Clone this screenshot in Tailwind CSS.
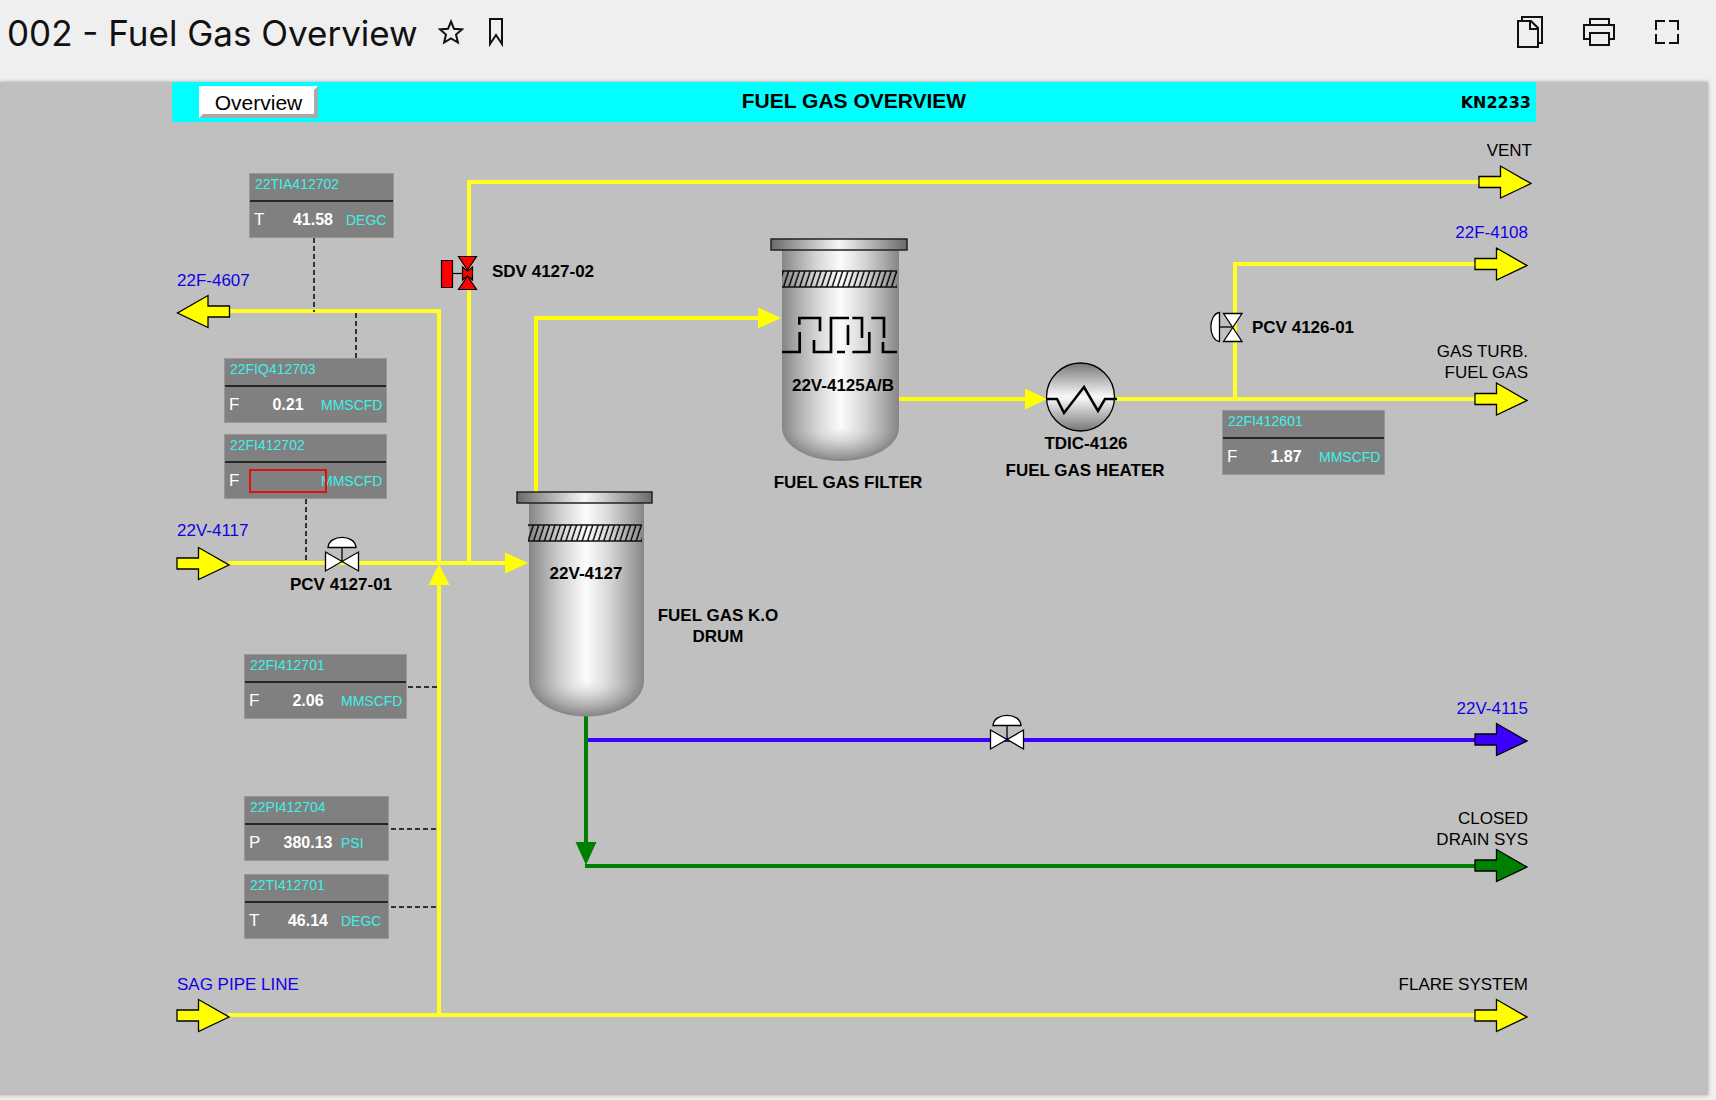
<!DOCTYPE html>
<html lang="en">
<head>
<meta charset="utf-8">
<meta name="viewport" content="width=device-width, initial-scale=1">
<title>002 - Fuel Gas Overview</title>
<script src="https://cdn.jsdelivr.net/npm/@tailwindcss/browser@4"></script>
</head>
<body class="flex min-h-screen flex-col bg-[#efefef] font-['Liberation_Sans',Arial,sans-serif] text-black">

<header class="flex h-[82px] shrink-0 items-start justify-between pt-[11px] pr-[37px] pl-[7px]">
  <div class="flex items-center gap-5">
    <h1 class="font-['Inter',sans-serif] text-[35px] leading-[44px] text-[#111]">002 - Fuel Gas Overview</h1>
    <div class="flex items-center gap-6 pb-0.5">
      <button type="button" aria-label="Add to favourites">
        <svg class="block" width="26" height="26" viewBox="0 0 26 26" fill="none" stroke="#111" stroke-width="2"><path d="M13 2.500l3 7.300 8 .6-6 5.100 1.900 8-6.900-4.200-6.900 4.200 1.900-8-6-5.100 8-.6z"/></svg>
      </button>
      <button type="button" aria-label="Bookmark">
        <svg class="block" width="16" height="30" viewBox="0 0 16 30" fill="none" stroke="#111" stroke-width="2"><path d="M2 2h12v25l-6-9-6 9z"/></svg>
      </button>
    </div>
  </div>
  <div class="flex items-center gap-10 pt-[5px]">
    <button type="button" aria-label="Copy">
      <svg class="block" width="26" height="32" viewBox="0 0 26 32" fill="none" stroke="#111" stroke-width="2"><path d="M5 4V1h20v26h-3M1 5h13l7 7v19H1zM13 5v8h8"/></svg>
    </button>
    <button type="button" aria-label="Print">
      <svg class="block" width="32" height="28" viewBox="0 0 32 28" fill="none" stroke="#111" stroke-width="2"><path d="M7 7V1h19v6M7 21H1V7h30v14h-5M7 15h19v12H7z"/></svg>
    </button>
    <button type="button" aria-label="Full screen">
      <svg class="block" width="24" height="24" viewBox="0 0 24 24" fill="none" stroke="#111" stroke-width="2"><path d="M1 10V1h9M14 1h9v9M23 14v9h-9M10 23H1v-9"/></svg>
    </button>
  </div>
</header>

<main class="mr-2 mb-[5px] grow bg-[#c0c0c0] shadow-[0_0_4px_rgba(0,0,0,0.3)]">
  <div class="mx-auto w-[1364px]">

    <div class="grid h-10 grid-cols-3 items-center bg-[#00ffff]">
      <button type="button" class="ml-[27px] h-8 w-[119px] justify-self-start border-4 border-t-white border-r-[#a9a9a9] border-b-[#a9a9a9] border-l-white bg-white pt-0.5 text-[21px] leading-[22px]">Overview</button>
      <h2 class="pb-0.5 text-center text-[21px] leading-6 font-bold">FUEL GAS OVERVIEW</h2>
      <span class="pt-0.5 pr-[5px] text-right font-['DejaVu_Sans',sans-serif] text-base leading-6 font-bold">KN2233</span>
    </div>

    <div class="relative h-[973px]">
      <svg class="absolute inset-0" width="1364" height="973" viewBox="172 122 1364 973" fill="none" aria-hidden="true">
        <defs>
          <linearGradient id="steel">
            <stop offset="0" stop-color="#858585"/><stop offset=".12" stop-color="#a8a8a8"/><stop offset=".3" stop-color="#d6d6d6"/>
            <stop offset=".5" stop-color="#fcfcfc"/><stop offset=".7" stop-color="#d6d6d6"/><stop offset=".88" stop-color="#a8a8a8"/><stop offset="1" stop-color="#858585"/>
          </linearGradient>
          <linearGradient id="flange">
            <stop offset="0" stop-color="#6a6a6a"/><stop offset=".5" stop-color="#f6f6f6"/><stop offset="1" stop-color="#6a6a6a"/>
          </linearGradient>
          <linearGradient id="heater" x2="0" y2="1">
            <stop offset="0" stop-color="#777"/><stop offset=".5" stop-color="#fafafa"/><stop offset="1" stop-color="#777"/>
          </linearGradient>
          <radialGradient id="dome" cx=".5" cy="0" r="1" gradientTransform="translate(.25 0) scale(.5 1)">
            <stop offset="0" stop-color="#fcfcfc"/><stop offset=".4" stop-color="#d6d6d6"/><stop offset=".76" stop-color="#a8a8a8"/><stop offset="1" stop-color="#858585"/>
          </radialGradient>
          <pattern id="hatch" width="5.400" height="20" patternUnits="userSpaceOnUse" patternTransform="skewX(-18)">
            <path d="M2 0V20" stroke="#000" stroke-width="1.500"/>
          </pattern>
          <path id="arrow" d="M.5 11H22V.5L52.500 18L22 32.500V22H.5Z" stroke="#000" stroke-width="1.300"/>
          <g id="valve" stroke="#000" stroke-width="1.300">
            <path d="M-16.500 -10L16.500 9V-10L-16.500 9Z" fill="#fff"/>
            <path d="M0 0V-15"/>
            <path d="M-14 -14.500C-13 -28 13 -28 14 -14.500Z" fill="#fff"/>
          </g>
        </defs>

        <!-- gas piping -->
        <g stroke="#ffff22" stroke-width="4">
          <path d="M1479 182H469V563"/>
          <path d="M230 311H439V564M439 584V1015"/>
          <path d="M228 563H506M228 1015H1475"/>
          <path d="M1114 399H1475M1235 399V264H1475"/>
        </g>
        <g stroke="#ff0" stroke-width="4">
          <path d="M536 492V318H759M898 399H1027"/>
        </g>
        <g fill="#ff0">
          <path d="M439 564L449.500 585H428.500Z"/>
          <path d="M505 552.500L528 563L505 573.500Z"/>
          <path d="M758 307.500L781 318L758 328.500Z"/>
          <path d="M1025 388.500L1047 399L1025 409.500Z"/>
        </g>

        <!-- liquid and drain piping -->
        <path d="M587 740H1475" stroke="#3c00ff" stroke-width="4"/>
        <path d="M586 714V844M585 866H1475" stroke="#008000" stroke-width="4"/>
        <path d="M575.500 842H596.500L586 865Z" fill="#008000"/>

        <!-- instrument leads -->
        <g stroke="#333" stroke-width="2" stroke-dasharray="5 3">
          <path d="M314 238V312M356 313V358M306 499V562"/>
          <path d="M408 687H438M391 829H438M391 907H438"/>
        </g>

        <!-- fuel gas filter -->
        <path d="M782 250H899V428H782Z" fill="url(#steel)"/>
        <path d="M782 427.500H899C899 446 873 461 840.500 461S782 446 782 427.500Z" fill="url(#dome)"/>
        <path d="M771 239H907V250H771Z" fill="url(#flange)" stroke="#222" stroke-width="1.500"/>
        <path d="M782 271H897V287H782Z" fill="url(#hatch)"/>
        <path d="M782 271H897M782 287H897" stroke="#111" stroke-width="1.500"/>
        <path transform="translate(740 220) scale(.3333)" stroke="#000" stroke-width="8" d="M126 396H179V336M178 314V294H240V334M222 360V396H273V294H327M324 315V375M291 396H315M337 294H366V354M337 396H388V336M394 294H432V354M429 366V396H471"/>

        <!-- knock-out drum -->
        <path d="M529 503H644V681H529Z" fill="url(#steel)"/>
        <path d="M529 680.500H644C644 701 618 716.500 586.500 716.500S529 701 529 680.500Z" fill="url(#dome)"/>
        <path d="M517 492H652V503H517Z" fill="url(#flange)" stroke="#222" stroke-width="1.500"/>
        <path d="M528 525H642V541H528Z" fill="url(#hatch)"/>
        <path d="M528 525H642M528 541H642" stroke="#111" stroke-width="1.500"/>

        <!-- fuel gas heater -->
        <circle cx="1080.500" cy="397" r="34" fill="url(#heater)" stroke="#000" stroke-width="1.300"/>
        <path d="M1047 399H1057L1064 413L1084 387L1098 411L1105 399H1117" stroke="#000" stroke-width="2.500"/>

        <!-- control valves -->
        <use href="#valve" x="342" y="562"/>
        <use href="#valve" x="1007" y="740"/>
        <g stroke="#000" stroke-width="1.300">
          <path d="M1223.500 313.500H1242L1223.500 341.500H1242Z" fill="#fff"/>
          <path d="M1220 327H1232"/>
          <path d="M1219.500 312.500V341.500C1208 340 1208 314 1219.500 312.500Z" fill="#fff"/>
        </g>

        <!-- shutdown valve -->
        <g stroke="#000" stroke-width="1.200" fill="#f00">
          <path d="M441.500 260.500H452.500V287.500H441.500Z"/>
          <path d="M453 273.500H463"/>
          <path d="M462.500 267L467.500 271L472.500 267V280L467.500 276L462.500 280Z"/>
          <path d="M458.500 256.500H476.500L467.500 270Z"/>
          <path d="M458.500 289.500H476.500L467.500 276Z"/>
        </g>

        <!-- battery limits -->
        <g fill="#ff0">
          <use href="#arrow" x="1478.500" y="165.500"/>
          <use href="#arrow" x="1474.500" y="247.500"/>
          <use href="#arrow" x="1474.500" y="382.500"/>
          <use href="#arrow" x="1474.500" y="999"/>
          <use href="#arrow" x="176.500" y="547"/>
          <use href="#arrow" x="176.500" y="999"/>
          <use href="#arrow" transform="translate(230 295) scale(-1 1)"/>
        </g>
        <use href="#arrow" x="1474.500" y="723" fill="#3c00ff"/>
        <use href="#arrow" x="1474.500" y="849" fill="#008000"/>
      </svg>

      <!-- stream labels -->
      <div class="text-[17px] leading-[21px] whitespace-nowrap">
        <a href="#22F-4607" class="absolute top-[148px] left-[5px] text-[#1100e6]">22F-4607</a>
        <a href="#22V-4117" class="absolute top-[398px] left-[5px] text-[#1100e6]">22V-4117</a>
        <a href="#SAG" class="absolute top-[852px] left-[5px] text-[#1100e6]">SAG PIPE LINE</a>
        <span class="absolute top-[18px] right-[4px]">VENT</span>
        <a href="#22F-4108" class="absolute top-[100px] right-2 text-[#1100e6]">22F-4108</a>
        <span class="absolute top-[219px] right-2 text-right">GAS TURB.<br>FUEL GAS</span>
        <a href="#22V-4115" class="absolute top-[576px] right-2 text-[#1100e6]">22V-4115</a>
        <span class="absolute top-[686px] right-2 text-right">CLOSED<br>DRAIN SYS</span>
        <span class="absolute top-[852px] right-2">FLARE SYSTEM</span>
      </div>

      <!-- equipment labels -->
      <div class="text-center text-[17px] leading-[21px] font-bold whitespace-nowrap">
        <span class="absolute top-[139px] left-[320px]">SDV 4127-02</span>
        <span class="absolute top-[452px] left-[118px]">PCV 4127-01</span>
        <span class="absolute top-[195px] left-[1080px]">PCV 4126-01</span>
        <span class="absolute top-[441px] left-[414px] -translate-x-1/2">22V-4127</span>
        <span class="absolute top-[483px] left-[546px] -translate-x-1/2">FUEL GAS K.O<br>DRUM</span>
        <span class="absolute top-[253px] left-[671px] -translate-x-1/2">22V-4125A/B</span>
        <span class="absolute top-[350px] left-[676px] -translate-x-1/2">FUEL GAS FILTER</span>
        <span class="absolute top-[311px] left-[914px] -translate-x-1/2">TDIC-4126</span>
        <span class="absolute top-[338px] left-[913px] -translate-x-1/2">FUEL GAS HEATER</span>
      </div>

      <!-- instrument readings -->
      <section class="absolute top-[51px] left-[77px] h-[65px] w-[145px] border border-[#979797] bg-[#808080]">
        <h3 class="h-7 border-b-2 border-[#262626] pl-[5px] text-sm text-[#40f0e8]">22TIA412702</h3>
        <div class="flex h-[35px] items-center pl-1 text-white">
          <span class="w-5 text-[17px]">T</span><output class="h-6 w-[78px] text-center text-base leading-6 font-bold">41.58</output><span class="-ml-1.5 text-sm text-[#40f0e8]">DEGC</span>
        </div>
      </section>
      <section class="absolute top-[236px] left-[52px] h-[65px] w-[163px] border border-[#979797] bg-[#808080]">
        <h3 class="h-7 border-b-2 border-[#262626] pl-[5px] text-sm text-[#40f0e8]">22FIQ412703</h3>
        <div class="flex h-[35px] items-center pl-1 text-white">
          <span class="w-5 text-[17px]">F</span><output class="h-6 w-[78px] text-center text-base leading-6 font-bold">0.21</output><span class="-ml-1.5 text-sm text-[#40f0e8]">MMSCFD</span>
        </div>
      </section>
      <section class="absolute top-[312px] left-[52px] h-[65px] w-[163px] border border-[#979797] bg-[#808080]">
        <h3 class="h-7 border-b-2 border-[#262626] pl-[5px] text-sm text-[#40f0e8]">22FI412702</h3>
        <div class="flex h-[35px] items-center pl-1 text-white">
          <span class="w-5 text-[17px]">F</span><output class="relative z-10 h-6 w-[78px] border-2 border-[#e01010]"></output><span class="-ml-1.5 text-sm text-[#40f0e8]">MMSCFD</span>
        </div>
      </section>
      <section class="absolute top-[532px] left-[72px] h-[65px] w-[163px] border border-[#979797] bg-[#808080]">
        <h3 class="h-7 border-b-2 border-[#262626] pl-[5px] text-sm text-[#40f0e8]">22FI412701</h3>
        <div class="flex h-[35px] items-center pl-1 text-white">
          <span class="w-5 text-[17px]">F</span><output class="h-6 w-[78px] text-center text-base leading-6 font-bold">2.06</output><span class="-ml-1.5 text-sm text-[#40f0e8]">MMSCFD</span>
        </div>
      </section>
      <section class="absolute top-[674px] left-[72px] h-[65px] w-[145px] border border-[#979797] bg-[#808080]">
        <h3 class="h-7 border-b-2 border-[#262626] pl-[5px] text-sm text-[#40f0e8]">22PI412704</h3>
        <div class="flex h-[35px] items-center pl-1 text-white">
          <span class="w-5 text-[17px]">P</span><output class="h-6 w-[78px] text-center text-base leading-6 font-bold">380.13</output><span class="-ml-1.5 text-sm text-[#40f0e8]">PSI</span>
        </div>
      </section>
      <section class="absolute top-[752px] left-[72px] h-[65px] w-[145px] border border-[#979797] bg-[#808080]">
        <h3 class="h-7 border-b-2 border-[#262626] pl-[5px] text-sm text-[#40f0e8]">22TI412701</h3>
        <div class="flex h-[35px] items-center pl-1 text-white">
          <span class="w-5 text-[17px]">T</span><output class="h-6 w-[78px] text-center text-base leading-6 font-bold">46.14</output><span class="-ml-1.5 text-sm text-[#40f0e8]">DEGC</span>
        </div>
      </section>
      <section class="absolute top-[288px] left-[1050px] h-[65px] w-[163px] border border-[#979797] bg-[#808080]">
        <h3 class="h-7 border-b-2 border-[#262626] pl-[5px] text-sm text-[#40f0e8]">22FI412601</h3>
        <div class="flex h-[35px] items-center pl-1 text-white">
          <span class="w-5 text-[17px]">F</span><output class="h-6 w-[78px] text-center text-base leading-6 font-bold">1.87</output><span class="-ml-1.5 text-sm text-[#40f0e8]">MMSCFD</span>
        </div>
      </section>
    </div>
  </div>
</main>
</body>
</html>
